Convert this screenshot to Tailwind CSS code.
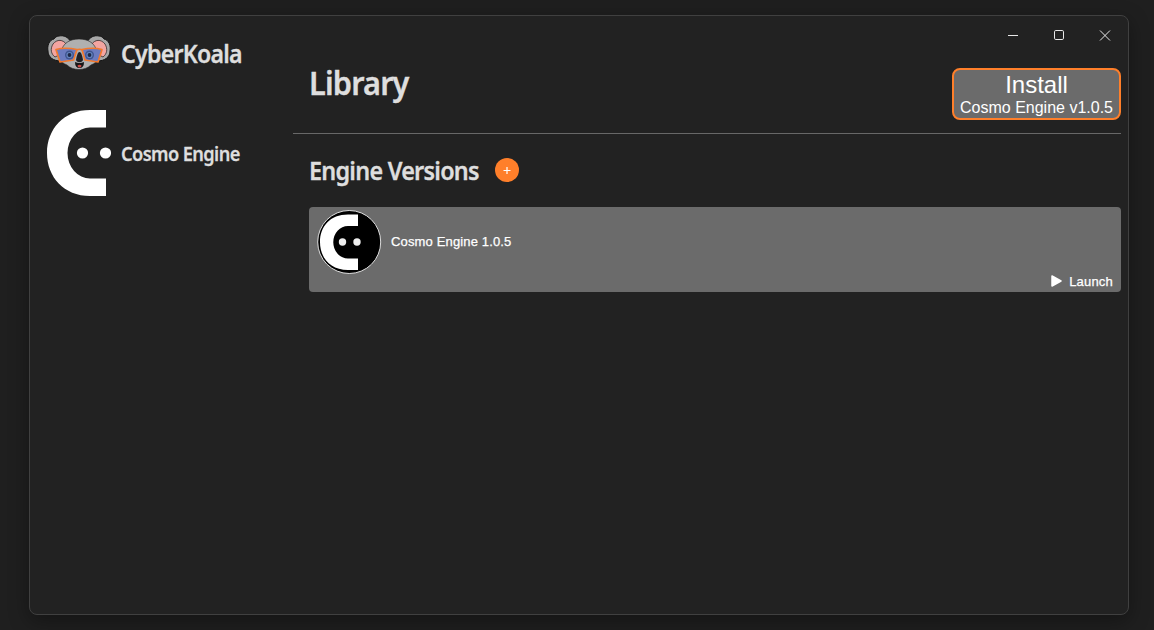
<!DOCTYPE html>
<html lang="en">
<head>
<meta charset="utf-8">
<title>CyberKoala</title>
<script src="https://cdn.jsdelivr.net/npm/@tailwindcss/browser@4"></script>
</head>
<body class="h-[630px] overflow-hidden bg-[#1f1f1f] pl-[29px] pt-[15px] font-['Liberation_Sans',Arial,sans-serif] text-white">
<div class="flex h-[600px] w-[1100px] rounded-lg border border-[#404040] bg-[#222222] shadow-[0_6px_20px_rgba(0,0,0,0.35)]">
  <aside class="w-[263px] shrink-0 pl-[17px] pt-[18px] font-['Noto_Sans',sans-serif] text-[#dedede]">
    <div class="flex h-[38px] items-center">
      <svg class="h-[38px] w-[64px] shrink-0" viewBox="0 0 64 38">
        <g fill="#a8a8a8" stroke="#141414" stroke-width="1">
          <path d="M24 8C21 3 17 1 12 2C9 2 8 4 7 5C2 6 0 12 1 17C1 23 6 27 14 27L25 20Z"/>
          <path d="M40 8C43 3 47 1 52 2C55 2 56 4 57 5C62 6 64 12 63 17C63 23 58 27 50 27L39 20Z"/>
        </g>
        <path d="M20 11C16 5 10 5 6 10C3 15 4 20 8 23L20 17ZM44 11C48 5 54 5 58 10C61 15 60 20 56 23L44 17Z" fill="#f3a5a1" stroke="#31292b" stroke-width=".8"/>
        <path d="M32 5C41 5 47 9 49 15C53 22 52 28 44 31C38 37 26 37 20 31C12 28 11 22 15 15C17 9 23 5 32 5Z" fill="#b0b0b0" stroke="#222" stroke-width=".6"/>
        <path d="M9 15.500Q18 13 30 15.500L26.500 26L13 28ZM35 15.500Q46 13 55 15.500L51 28L38 26Z" fill="#6c7cc0" stroke="#f3792d" stroke-width="1.700" stroke-linejoin="round"/>
        <path d="M29.500 16Q32.500 14.500 35.500 16" fill="none" stroke="#f3792d" stroke-width="1.500"/>
        <path d="M32.500 18C34.500 18 35.500 23 36 26C35 29 30 29 29 26C29.500 23 30.500 18 32.500 18Z" fill="#202126"/>
        <path d="M28 28Q32.500 30 37 28Q37 34 32.500 34Q28 34 28 28Z" fill="#161616"/>
        <path d="M30.500 31.500Q32.500 30 34.500 31.500Q34.500 33.500 32.500 33.500Q30.500 33.500 30.500 31.500Z" fill="#ce4a45"/>
        <circle cx="22.500" cy="21" r="4.500" fill="#3f5590"/><circle cx="42.500" cy="21" r="4.500" fill="#3f5590"/>
        <circle cx="22.500" cy="21" r="3.100" fill="#6684bd"/><circle cx="42.500" cy="21" r="3.100" fill="#6684bd"/>
        <circle cx="22.500" cy="21" r="1.900" fill="#1c2747"/><circle cx="42.500" cy="21" r="1.900" fill="#1c2747"/>
      </svg>
      <h1 class="ml-[10px] mt-[2px] origin-left scale-x-[0.925] whitespace-nowrap text-[25px] font-semibold tracking-[-0.8px] [-webkit-text-stroke:0.35px_#dedede]">CyberKoala</h1>
    </div>
    <div class="mt-[38px] flex h-[86px] items-center">
      <svg class="h-[86px] w-[64px] shrink-0" viewBox="0 0 64 86" fill="#fff">
        <path d="M59 0V17.500H43A22.500 25.500 0 0 0 43 68.500H59V86H43C17 86 0 67 0 43S17 0 43 0Z"/>
        <circle cx="35.500" cy="43" r="5.600"/><circle cx="58.500" cy="43" r="5.600"/>
      </svg>
      <h2 class="ml-[10px] mt-px origin-left scale-x-[0.91] whitespace-nowrap text-xl font-semibold tracking-[-0.65px] [-webkit-text-stroke:0.3px_#dedede]">Cosmo Engine</h2>
    </div>
  </aside>
  <main class="w-[828px]">
    <nav class="flex h-[40px] justify-end pr-[6px]">
      <svg class="mt-[13px] h-[13px] w-[107px]" viewBox="0 0 107 13" fill="none" stroke="#e8e8e8">
        <path d="M0 6.500H10"/><rect x="46.500" y="1.500" width="9" height="9" rx="1.300"/><path d="M92 1.500L102 11.500M102 1.500L92 11.500"/>
      </svg>
    </nav>
    <header class="flex h-[78px] items-start justify-between border-b border-[#686868] pl-4 pt-3">
      <h1 class="-mt-[9px] origin-left scale-x-[0.93] whitespace-nowrap font-['Noto_Sans',sans-serif] text-[33px] font-semibold leading-[48px] tracking-[-0.9px] text-[#dedede] [-webkit-text-stroke:0.4px_#dedede]">Library</h1>
      <button class="h-[52px] w-[169px] rounded-lg border-2 border-[#ff7f2a] bg-[#6b6b6b]">
        <div class="text-2xl leading-[26px]">Install</div>
        <div class="relative top-px whitespace-nowrap text-base leading-[18px]">Cosmo Engine v1.0.5</div>
      </button>
    </header>
    <section class="pl-4">
      <div class="flex h-[73px] items-center pb-[2px]">
        <h2 class="mt-[3px] w-[186px] origin-left scale-x-[0.935] whitespace-nowrap font-['Noto_Sans',sans-serif] text-[25px] font-semibold tracking-[-0.8px] text-[#dedede] [-webkit-text-stroke:0.35px_#dedede]">Engine Versions</h2>
        <button class="flex size-6 items-center justify-center rounded-full bg-[#ff7f2a]"><svg class="size-2" viewBox="0 0 8 8" stroke="#fff" fill="none"><path d="M.5 4.500H7.500M4 1V8" stroke-width="1.200"/></svg></button>
      </div>
      <article class="flex h-[85px] rounded-sm bg-[#6b6b6b] pl-2 pr-2 pt-[2px]">
        <svg class="size-[65px] shrink-0" viewBox="0 0 65 65">
          <circle cx="32.200" cy="33" r="31.500" fill="#000" stroke="#ddd"/>
          <path d="M41 5.500V17H31A14.500 16 0 0 0 31 49.500H41V61H31C13 61 3 48.500 3 33S13 5.500 31 5.500Z" fill="#fff"/>
          <circle cx="25.500" cy="33" r="3.700" fill="#eee"/><circle cx="40" cy="33" r="3.700" fill="#eee"/>
        </svg>
        <h3 class="ml-[9px] mt-[25px] whitespace-nowrap text-[13px] leading-4 tracking-[0.15px] [-webkit-text-stroke:0.25px_#fff]">Cosmo Engine 1.0.5</h3>
        <button class="mb-[2px] ml-auto flex items-center gap-[7px] self-end text-[13px] leading-4 tracking-[0.2px] [-webkit-text-stroke:0.25px_#fff]">
          <svg class="-mt-[2px] h-3 w-[11px]" viewBox="0 0 11 12"><path d="M1 1L10 6L1 11Z" fill="#fff" stroke="#fff" stroke-width="1.500" stroke-linejoin="round"/></svg><span>Launch</span>
        </button>
      </article>
    </section>
  </main>
</div>
</body>
</html>
